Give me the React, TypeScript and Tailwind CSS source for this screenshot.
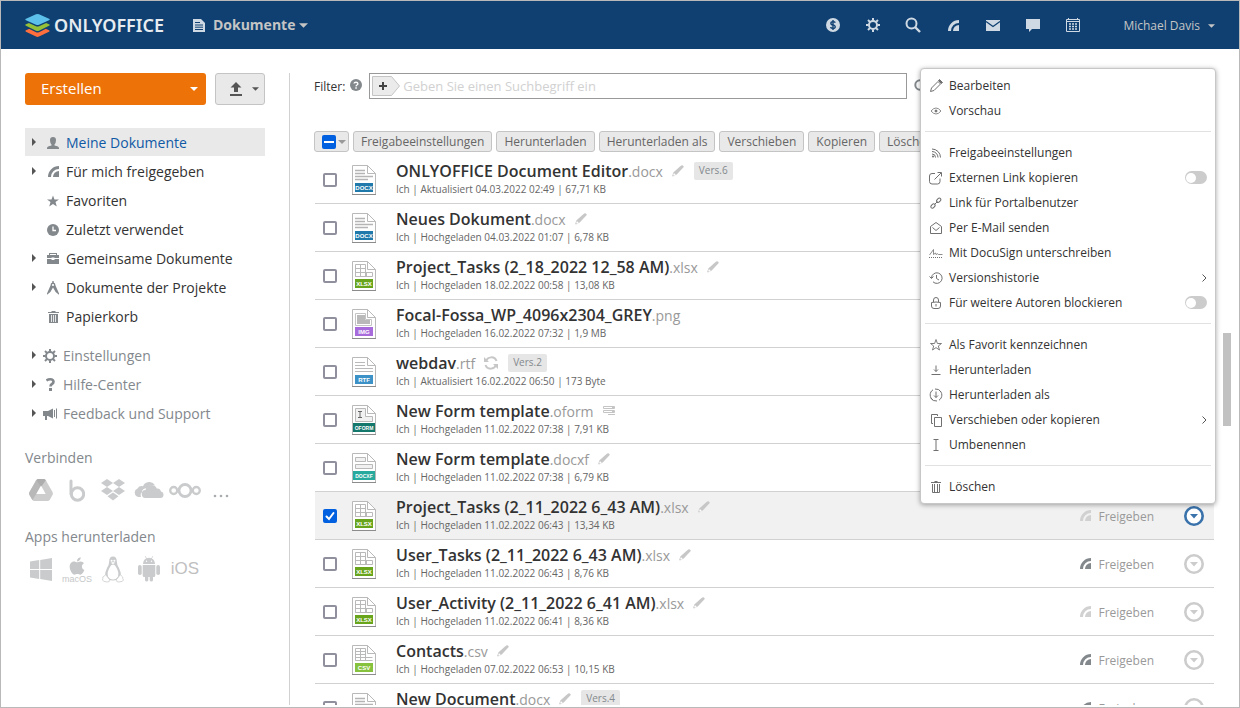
import { useState } from 'react'
import type { ReactNode } from 'react'
import { FaApple } from 'react-icons/fa'

type Badge = 'edit' | 'sync' | 'form'

interface FileItem {
  id: number
  name: string
  ext: string
  action: string
  date: string
  size: string
  shared: boolean
  badge?: Badge
  version?: number
}

const files: FileItem[] = [
  { id: 1, name: 'ONLYOFFICE Document Editor', ext: 'docx', action: 'Aktualisiert', date: '04.03.2022 02:49', size: '67,71 KB', shared: false, badge: 'edit', version: 6 },
  { id: 2, name: 'Neues Dokument', ext: 'docx', action: 'Hochgeladen', date: '04.03.2022 01:07', size: '6,78 KB', shared: false, badge: 'edit' },
  { id: 3, name: 'Project_Tasks (2_18_2022 12_58 AM)', ext: 'xlsx', action: 'Hochgeladen', date: '18.02.2022 00:58', size: '13,08 KB', shared: false, badge: 'edit' },
  { id: 4, name: 'Focal-Fossa_WP_4096x2304_GREY', ext: 'png', action: 'Hochgeladen', date: '16.02.2022 07:32', size: '1,9 MB', shared: false },
  { id: 5, name: 'webdav', ext: 'rtf', action: 'Aktualisiert', date: '16.02.2022 06:50', size: '173 Byte', shared: false, badge: 'sync', version: 2 },
  { id: 6, name: 'New Form template', ext: 'oform', action: 'Hochgeladen', date: '11.02.2022 07:38', size: '7,91 KB', shared: false, badge: 'form' },
  { id: 7, name: 'New Form template', ext: 'docxf', action: 'Hochgeladen', date: '11.02.2022 07:38', size: '6,79 KB', shared: false, badge: 'edit' },
  { id: 8, name: 'Project_Tasks (2_11_2022 6_43 AM)', ext: 'xlsx', action: 'Hochgeladen', date: '11.02.2022 06:43', size: '13,34 KB', shared: false, badge: 'edit' },
  { id: 9, name: 'User_Tasks (2_11_2022 6_43 AM)', ext: 'xlsx', action: 'Hochgeladen', date: '11.02.2022 06:43', size: '8,76 KB', shared: true, badge: 'edit' },
  { id: 10, name: 'User_Activity (2_11_2022 6_41 AM)', ext: 'xlsx', action: 'Hochgeladen', date: '11.02.2022 06:41', size: '8,36 KB', shared: false, badge: 'edit' },
  { id: 11, name: 'Contacts', ext: 'csv', action: 'Hochgeladen', date: '07.02.2022 06:53', size: '10,15 KB', shared: true, badge: 'edit' },
  { id: 12, name: 'New Document', ext: 'docx', action: 'Aktualisiert', date: '07.02.2022 06:50', size: '7,12 KB', shared: true, badge: 'edit', version: 4 },
]

const fileTypes: Record<string, { label: string; color: string }> = {
  docx: { label: 'DOCX', color: '#1f7aab' },
  xlsx: { label: 'XLSX', color: '#68a51d' },
  png: { label: 'IMG', color: '#a76bdb' },
  rtf: { label: 'RTF', color: '#3c92c7' },
  oform: { label: 'OFORM', color: '#15786c' },
  docxf: { label: 'DOCXF', color: '#27a99d' },
  csv: { label: 'CSV', color: '#87c23f' },
}

// Icons

function Logo() {
  return (
    <svg width="25" height="23" viewBox="0 0 25 23">
      <path d="M12.5 11.2 1 16.2q-1.4.8 0 1.5l10 4.9q1.5.6 3 0l10-4.9q1.4-.7 0-1.5z" fill="#ff6f3d" />
      <path d="M12.5 7 1 11.8q-1.4.7 0 1.5l10 4.9q1.5.6 3 0l10-4.9q1.4-.8 0-1.5z" fill="#0f4071" />
      <path d="M12.5 5.5 1 10.3q-1.4.7 0 1.5l10 4.9q1.5.6 3 0l10-4.9q1.4-.8 0-1.5z" fill="#95c038" />
      <path d="M11 1.8q1.5-.6 3 0l10 4.4q1.4.7 0 1.5l-10 4.6q-1.5.6-3 0L1 7.7q-1.4-.8 0-1.5z" fill="#0f4071" />
      <path d="M11 .3q1.5-.6 3 0l10 4.4q1.4.7 0 1.5l-10 4.6q-1.5.6-3 0L1 6.2q-1.4-.8 0-1.5z" fill="#5dc0ea" />
    </svg>
  )
}

function Caret({ className }: { className: string }) {
  return (
    <svg className={className} viewBox="0 0 8 4" fill="currentColor">
      <path d="M0 0h8L4 4z" />
    </svg>
  )
}

function ShareIcon({ className }: { className: string }) {
  return (
    <svg className={className} viewBox="0 0 11 11" fill="currentColor">
      <path d="M11 0A11 11 0 0 0 0 11h3A8 8 0 0 1 11 3z" />
      <path d="M11 5A6 6 0 0 0 5 11h6z" />
    </svg>
  )
}

function GearIcon() {
  return (
    <svg width="14" height="14" viewBox="0 0 14 14" fill="none" stroke="currentColor">
      <circle cx="7" cy="7" r="4" strokeWidth="2" />
      <path d="M7 0v2.5M7 11.5V14M0 7h2.5M11.5 7H14M2 2l1.9 1.9M10.1 10.1 12 12M12 2l-1.9 1.9M3.9 10.1 2 12" strokeWidth="2" />
    </svg>
  )
}

function DocumentIcon() {
  return (
    <svg width="12" height="13" viewBox="0 0 12 13">
      <path d="M0 0h8l4 4v9H0z" fill="currentColor" />
      <path d="M2 3.5h5M2 6h8M2 8.2h8M2 10.5h8" stroke="#0f4071" strokeWidth="1" />
    </svg>
  )
}

function PencilIcon() {
  return (
    <svg width="12" height="12" viewBox="0 0 12 12" className="text-[#c7c7c7]">
      <path d="M7.7 1.7 9.3.4q.9-.6 1.6.2l.5.5q.6.8-.1 1.5L4.700 9.500 1 11.600.2 10.900 1.300 7.400z" fill="currentColor" />
      <path d="m1.900 8 2 1.900-1.900.9-.8-.8z" fill="#fff" />
    </svg>
  )
}

function SyncIcon() {
  return (
    <svg width="14" height="14" viewBox="0 0 14 14" fill="none" stroke="#c7c7c7" strokeWidth="2">
      <path d="M2 5.500A5.500 5.500 0 0 1 12.500 5M12 8.500A5.500 5.500 0 0 1 1.500 9" />
      <path d="M0 1v5h5zM14 13V8H9z" fill="#c7c7c7" stroke="none" />
    </svg>
  )
}

function FormIcon() {
  return (
    <svg width="12" height="10" viewBox="0 0 12 10" fill="none" stroke="#c4c4c4">
      <path d="M.5.5h11v2H.5zM.5 4.500h11v2H.5zM5 8.500h7" />
      <path d="M9 1.500h2M9 5.500h2" />
    </svg>
  )
}

function FileIcon({ ext }: { ext: string }) {
  const type = fileTypes[ext]
  const wide = type.label.length > 4
  return (
    <svg width="24" height="30" viewBox="0 0 24 30" className="shrink-0">
      <path d="M.5.5h15l8 8v21H.5z" fill="#fff" stroke="#b9b9b9" />
      <path d="M0 29.500h24" stroke="#8c8c8c" />
      <path d="M15.500.5v8h8" fill="none" stroke="#b9b9b9" />
      {ext === 'docx' && <path d="M3 5.500h10M3 8.500h10M3 11.500h18M3 14.500h13" stroke="#b4b4b4" strokeWidth="1.500" />}
      {ext === 'rtf' && <path d="M3 5.500h10M3 8.500h10M3 11.500h18M3 14.500h18" stroke="#b9b9b9" />}
      {ext === 'xlsx' && (
        <path d="M3.500 3.500h10v12h-10zM3.500 7.500h10M3.500 11.500h17v4h-17M8.500 3.500v12M14.500 11.500v4" fill="none" stroke="#b9b9b9" />
      )}
      {ext === 'csv' && (
        <path d="M3.500 3.500h10v12h-10zM3.500 6.500h10M3.500 9.500h10M3.500 12.500h17M3.500 15.500h17M8.500 3.500v12" fill="none" stroke="#b9b9b9" />
      )}
      {ext === 'png' && (
        <>
          <path d="M3.500 4.500h10v6h6v6h-16z" fill="none" stroke="#c4c4c4" />
          <path d="M5 6h8v5h5v4H5z" fill="#b9b9b9" />
        </>
      )}
      {ext === 'oform' && (
        <>
          <path d="M3.500 3.500h10v8h7v5h-17z" fill="#f1f1f1" stroke="#b9b9b9" />
          <path d="M6 6.500h4M8 6.500v6M6 12.500h4" stroke="#666" />
        </>
      )}
      {ext === 'docxf' && <path d="M3.500 4.500h10v4h-10zM3.500 11.500h17v4h-17z" fill="#f1f1f1" stroke="#b9b9b9" />}
      <rect x={wide ? 1 : 3} y="18" width={wide ? 22 : 18} height="9" fill={type.color} />
      <text x="12" y="25" textAnchor="middle" fontSize={wide ? 5 : 6} fontWeight="700" fill="#fff" className="font-['Liberation_Sans',sans-serif]">
        {type.label}
      </text>
    </svg>
  )
}

function MenuIcon({ children }: { children: ReactNode }) {
  return (
    <svg width="14" height="14" viewBox="0 0 14 14" fill="none" stroke="#707070" className="shrink-0">
      {children}
    </svg>
  )
}

// Header

const headerIcons: { label: string; icon: ReactNode }[] = [
  {
    label: 'Zahlungen',
    icon: (
      <svg width="14" height="14" viewBox="0 0 14 14">
        <circle cx="7" cy="7" r="7" fill="currentColor" />
        <path d="M9.300 4.700Q8.700 3.600 7 3.600q-2.100 0-2.100 1.600T7 6.900t2.200 1.800T7 10.400q-1.900 0-2.500-1.300M7 2v10" fill="none" stroke="#0f4071" strokeWidth="1.400" />
      </svg>
    ),
  },
  { label: 'Einstellungen', icon: <GearIcon /> },
  {
    label: 'Suche',
    icon: (
      <svg width="16" height="16" viewBox="0 0 16 16" fill="none" stroke="currentColor">
        <circle cx="6.500" cy="6.500" r="5" strokeWidth="2" />
        <path d="m10 10 5 5" strokeWidth="2.400" />
      </svg>
    ),
  },
  { label: 'Feed', icon: <ShareIcon className="size-[11px]" /> },
  {
    label: 'E-Mail',
    icon: (
      <svg width="14" height="11" viewBox="0 0 14 11">
        <path d="M0 0h14v11H0z" fill="currentColor" />
        <path d="m0 1.500 7 5 7-5" fill="none" stroke="#0f4071" strokeWidth="1.300" />
      </svg>
    ),
  },
  {
    label: 'Chat',
    icon: (
      <svg width="14" height="13" viewBox="0 0 14 13" fill="currentColor">
        <path d="M0 0h14v10H6l-3 3v-3H0z" />
      </svg>
    ),
  },
  {
    label: 'Kalender',
    icon: (
      <svg width="14" height="14" viewBox="0 0 14 14" fill="none" stroke="currentColor">
        <path d="M.5 1.500h13v12H.5zM.5 3.500h13" />
        <path d="M2.500 0v2M11.500 0v2" />
        <path d="M3 6h8M3 8.500h8M3 11h8" strokeWidth="1.600" strokeDasharray="2 1" />
      </svg>
    ),
  },
]

function Header() {
  return (
    <header className="flex h-12 shrink-0 items-center bg-[#0f4071] px-6 text-[#cfd9e3]">
      <a href="#" className="flex items-center gap-1">
        <Logo />
        <span className="font-['Noto_Sans',sans-serif] text-lg font-semibold text-[#e7ecf1]">ONLYOFFICE</span>
      </a>
      <button className="ml-[29px] flex items-center gap-2 text-sm font-bold text-[#c5c5c5]">
        <span className="text-[#cfd9e3]"><DocumentIcon /></span>
        Dokumente
        <Caret className="-ml-1 h-[5px] w-[9px]" />
      </button>
      <nav className="ml-auto flex">
        {headerIcons.map(item => (
          <button key={item.label} aria-label={item.label} className="flex h-12 w-10 items-center justify-center">
            {item.icon}
          </button>
        ))}
      </nav>
      <button className="ml-[30px] flex items-center gap-2 pt-0.5 text-xs text-[#c5c5c5]">
        Michael Davis
        <Caret className="h-1 w-[7px]" />
      </button>
    </header>
  )
}

// Sidebar

interface NavItem {
  label: string
  icon: ReactNode
  expandable?: boolean
  active?: boolean
}

const folders: NavItem[] = [
  {
    label: 'Meine Dokumente',
    expandable: true,
    active: true,
    icon: (
      <svg width="12" height="12" viewBox="0 0 12 12" fill="currentColor">
        <path d="M6 0q3 0 3 3.300Q9 6 7.500 7.500v1q4.500.8 4.500 2.500v1H0v-1q0-1.700 4.500-2.500v-1Q3 6 3 3.300 3 0 6 0z" />
      </svg>
    ),
  },
  { label: 'Für mich freigegeben', expandable: true, icon: <ShareIcon className="size-[11px]" /> },
  {
    label: 'Favoriten',
    icon: (
      <svg width="13" height="12" viewBox="0 0 13 12" fill="currentColor">
        <path d="m6.500 0 1.600 4.400H13L9.200 7.200 10.600 12 6.500 9.200 2.400 12l1.400-4.800L0 4.400h4.900z" />
      </svg>
    ),
  },
  {
    label: 'Zuletzt verwendet',
    icon: (
      <svg width="12" height="12" viewBox="0 0 12 12">
        <circle cx="6" cy="6" r="6" fill="currentColor" />
        <path d="M6 2.500v4h3" fill="none" stroke="#fff" strokeWidth="1.300" />
      </svg>
    ),
  },
  {
    label: 'Gemeinsame Dokumente',
    expandable: true,
    icon: (
      <svg width="12" height="11" viewBox="0 0 12 11" fill="currentColor">
        <path d="M2 0h8v2h2v3H7.500V4.500h-3V5H0V2h2zm1 1v1h6V1zM0 6h4.500v1h3V6H12v5H0z" />
      </svg>
    ),
  },
  {
    label: 'Dokumente der Projekte',
    expandable: true,
    icon: (
      <svg width="12" height="14" viewBox="0 0 12 14">
        <path d="M5.300 0h1.400v1.500q1.800.7 1.800 3L12 12.500v1.300L8.600 11 6 6.500 3.400 11 0 13.800v-1.300l3.500-8q0-2.300 1.800-3z" fill="currentColor" />
        <circle cx="6" cy="4" r="1.100" fill="#fff" />
      </svg>
    ),
  },
  {
    label: 'Papierkorb',
    icon: (
      <svg width="11" height="12" viewBox="0 0 11 12" fill="currentColor">
        <path d="M0 1h3.500V0h4v1H11v1H0zM1 3h9v9H1z" />
        <path d="M3.500 4v7M5.500 4v7M7.500 4v7" stroke="#fff" strokeWidth=".8" />
      </svg>
    ),
  },
]

const tools: NavItem[] = [
  { label: 'Einstellungen', expandable: true, icon: <GearIcon /> },
  {
    label: 'Hilfe-Center',
    expandable: true,
    icon: (
      <svg width="9" height="13" viewBox="0 0 9 13" fill="none" stroke="currentColor">
        <path d="M.5 2.500Q2 1.300 4.300 1.300 7.500 1.300 7.500 3.800 7.500 5.200 6 6T4.500 8.500" strokeWidth="2.600" />
        <path d="M3 10h3v3H3z" fill="currentColor" stroke="none" />
      </svg>
    ),
  },
  {
    label: 'Feedback und Support',
    expandable: true,
    icon: (
      <svg width="14" height="12" viewBox="0 0 14 12" fill="currentColor">
        <path d="M0 3h5l5-2.500v10L5 8H4v4H2V8H0zM11 2h1v7h-1zM13 .5h1v10h-1z" />
      </svg>
    ),
  },
]

const clouds: { label: string; icon: ReactNode }[] = [
  {
    label: 'Google Drive',
    icon: (
      <svg width="24" height="22" viewBox="0 0 24 22">
        <path d="M9.500 0h5q1.500 0 2.300 1.300L23.500 13q.8 1.500 0 3L21 20.500Q20 22 18.500 22h-13Q4 22 3 20.500L.5 16q-.8-1.500 0-3L7.200 1.300Q8 0 9.500 0z" fill="#cdcdcd" />
        <path d="M7.200 1.300 12 7.500 3.500 21 .5 16q-.8-1.500 0-3z" fill="#b8b8b8" />
        <path d="M9.500 0h5q1.500 0 2.300 1.300L12 8 7.200 1.300Q8 0 9.500 0z" fill="#adadad" />
        <path d="M12 6.500 7.300 15h9.400z" fill="#fff" />
      </svg>
    ),
  },
  {
    label: 'Box',
    icon: (
      <svg width="16" height="23" viewBox="0 0 16 23" fill="none" stroke="#cacbcc" strokeWidth="3">
        <circle cx="8.500" cy="15" r="6.200" />
        <path d="M2 2v13" strokeLinecap="round" />
      </svg>
    ),
  },
  {
    label: 'Dropbox',
    icon: (
      <svg width="24" height="22" viewBox="0 0 24 22" fill="#cacbcc">
        <path d="M6 0l6 4-6 4-6-4zM18 0l6 4-6 4-6-4zM6 8l6 4-6 4-6-4zM18 8l6 4-6 4-6-4zM12 13.500l5.500 3.800L12 21.500l-5.500-4.200z" />
      </svg>
    ),
  },
  {
    label: 'OneDrive',
    icon: (
      <svg width="30" height="16" viewBox="0 0 30 16" fill="#cacbcc" className="shrink-0">
        <path d="M7 15H4.500A4.500 4.500 0 0 1 3.500 6.400 5 5 0 0 1 9 4.200 6.700 6.700 0 0 1 21 3.300q-5-1-7.300 3-5.500-.3-5.900 4.200Q6 12 7 15z" />
        <path d="M12 16a4 4 0 0 1-.5-8 6 6 0 0 1 11.300-1.500Q26 6 27 9.500a3.300 3.300 0 0 1-.5 6.500z" />
      </svg>
    ),
  },
  {
    label: 'Nextcloud',
    icon: (
      <svg width="32" height="15" viewBox="0 0 32 15" fill="none" stroke="#cacbcc">
        <circle cx="16" cy="7.500" r="6" strokeWidth="2.800" />
        <circle cx="4.700" cy="7.500" r="3.500" strokeWidth="2.300" />
        <circle cx="27.300" cy="7.500" r="3.500" strokeWidth="2.300" />
      </svg>
    ),
  },
  {
    label: 'Mehr',
    icon: (
      <svg width="16" height="4" viewBox="0 0 16 4" fill="#a9acae" className="mt-3">
        <circle cx="2" cy="2" r="1.300" />
        <circle cx="8" cy="2" r="1.300" />
        <circle cx="14" cy="2" r="1.300" />
      </svg>
    ),
  },
]

const apps: { label: string; icon: ReactNode }[] = [
  {
    label: 'Windows',
    icon: (
      <svg width="22" height="23" viewBox="0 0 22 23" fill="#cacbcc">
        <path d="M0 3.500 9.200 2v9H0zM10.200 1.900 22 0v11H10.200zM0 12h9.200v9L0 19.500zM10.200 12H22v11l-11.800-1.900z" />
      </svg>
    ),
  },
  {
    label: 'macOS',
    icon: (
      <span className="flex flex-col items-center text-[#c6c7c8]">
        <FaApple size={20} />
        <span className="font-['Liberation_Sans',sans-serif] text-[9px] leading-[7px]">macOS</span>
      </span>
    ),
  },
  {
    label: 'Linux',
    icon: (
      <svg width="22" height="27" viewBox="0 0 22 27" fill="#fff" stroke="#cacbcc">
        <path d="M11 .5q3.800 0 3.800 5 0 3 2.200 6.500 2.500 4.500 1.500 9-2 3.500-7.500 3.500T3.500 21q-1-4.500 1.500-9 2.200-3.500 2.200-6.500 0-5 3.800-5z" fill="#cacbcc" stroke="none" />
        <path d="M11 8.500q-2.300 0-3 2.500-3.300 5-2 9.500 1.500 3 5 3t5-3q1.300-4.500-2-9.500-.7-2.500-3-2.500z" stroke="none" />
        <circle cx="9.600" cy="4.700" r="1" stroke="none" />
        <circle cx="12.400" cy="4.700" r="1" stroke="none" />
        <path d="M9 6.800 11 8.200l2-1.400-2-.8z" stroke="none" />
        <path d="M3.500 18.500 7.500 23.500Q8 26.500 5 26 .5 25.500.5 24q.5-1.500.3-3 1.700-.5 2.700-2.500zM18.500 18.500l-4 5q-.5 3 2.500 2.500 4.500-.5 4.500-2-1-1-.8-3-1.200-.5-2.200-2.500z" strokeWidth=".8" />
      </svg>
    ),
  },
  {
    label: 'Android',
    icon: (
      <svg width="22" height="26" viewBox="0 0 22 26" fill="#cacbcc">
        <path d="M5 8q.3-4.300 3.200-5.500L6.800.3l.5-.3 1.500 2.200q2.200-.7 4.400 0L14.700 0l.5.3-1.400 2.200Q16.700 3.700 17 8z" />
        <rect x="0" y="9" width="3.700" height="10" rx="1.800" />
        <rect x="18.300" y="9" width="3.700" height="10" rx="1.800" />
        <path d="M4.700 9h12.600v10.500q0 1.500-1.500 1.500H15v3.200a1.700 1.700 0 0 1-3.300 0V21h-1.400v3.200a1.700 1.700 0 0 1-3.300 0V21h-.8q-1.500 0-1.500-1.500z" />
        <circle cx="8.500" cy="5.200" r=".7" fill="#fff" />
        <circle cx="13.500" cy="5.200" r=".7" fill="#fff" />
      </svg>
    ),
  },
  { label: 'iOS', icon: <span className="font-['Liberation_Sans',sans-serif] text-[17px] font-medium text-[#bfc0c1]">iOS</span> },
]

function NavRow({ item, small }: { item: NavItem; small?: boolean }) {
  return (
    <a
      href="#"
      className={`flex h-7 items-center pl-[7px] text-sm ${item.active ? 'bg-[#e9e9e9] text-[#1059a5]' : small ? 'text-[#83888d]' : 'text-[#333]'}`}
    >
      <svg width="4" height="8" viewBox="0 0 4 8" fill="#555">
        {item.expandable && <path d="M0 0v8l4-4z" />}
      </svg>
      <span className={`flex items-center justify-center pt-px text-[#83888d] ${small ? 'ml-[5px] w-[18px]' : 'ml-[11px] w-3'}`}>{item.icon}</span>
      <span className={small ? 'ml-1 pt-0.5' : 'ml-[7px] pt-0.5'}>{item.label}</span>
    </a>
  )
}

function IconLinks({ title, items }: { title: string; items: { label: string; icon: ReactNode }[] }) {
  return (
    <section className="text-[#83888d]">
      <h2 className="text-sm">{title}</h2>
      <div className="mt-1.5 flex h-8 items-center gap-1">
        {items.map(item => (
          <a key={item.label} href="#" aria-label={item.label} className="flex w-8 items-center justify-center">
            {item.icon}
          </a>
        ))}
      </div>
    </section>
  )
}

function Sidebar() {
  return (
    <aside className="mx-6 w-60 shrink-0">
      <div className="flex gap-[9px]">
        <button className="flex h-8 flex-1 items-center justify-between rounded-[3px] bg-[#ed7309] pr-2 pl-4 text-[15px] text-white">
          <span className="pb-0.5">Erstellen</span>
          <Caret className="h-1 w-2" />
        </button>
        <button aria-label="Hochladen" className="flex h-8 w-[50px] items-center justify-end gap-2.5 rounded-[3px] border border-[#c4c4c4] bg-[#e9e9e9] pr-[5px] text-[#555]">
          <svg width="12" height="14" viewBox="0 0 12 14" fill="currentColor">
            <path d="m6 0 5.500 5.500H8V10H4V5.500H.5zM0 12h12v2H0z" />
          </svg>
          <Caret className="h-1 w-[7px]" />
        </button>
      </div>
      <nav className="mt-[23px] flex flex-col gap-px">
        {folders.map(item => <NavRow key={item.label} item={item} />)}
      </nav>
      <nav className="mt-[11px] flex flex-col gap-px">
        {tools.map(item => <NavRow key={item.label} item={item} small />)}
      </nav>
      <div className="mt-[21px] flex flex-col gap-[21px]">
        <IconLinks title="Verbinden" items={clouds} />
        <IconLinks title="Apps herunterladen" items={apps} />
      </div>
    </aside>
  )
}

// File list

function FilterBar() {
  return (
    <div className="flex items-start text-xs text-[#333]">
      <label htmlFor="filter" className="flex h-[26px] items-center pt-0.5">Filter:</label>
      <svg width="12" height="12" viewBox="0 0 12 12" className="mt-1.5 mr-[7px] ml-[5px]">
        <circle cx="6" cy="6" r="6" fill="#83888d" />
        <path d="M4 4.500Q4.200 3.200 6 3.200t1.900 1.500Q7.900 5.500 7 6T6 7.300" fill="none" stroke="#fff" strokeWidth="1.400" />
        <path d="M5.300 8.200h1.500v1.500H5.300z" fill="#fff" />
      </svg>
      <div className="flex h-[26px] flex-1 items-center border border-[#999] pl-0.5">
        <button aria-label="Filter hinzufügen" className="shrink-0">
          <svg width="28" height="20" viewBox="0 0 28 20">
            <path d="M.5.5h19l8 9.500-8 9.500H.5z" fill="#ebebeb" stroke="#c4c4c4" />
            <path d="M7 10h8M11 6v8" stroke="#444" strokeWidth="2" />
          </svg>
        </button>
        <input id="filter" className="ml-[3px] min-w-0 flex-1 pt-0.5 text-[13px] outline-none placeholder:text-[#d1d1d1]" placeholder="Geben Sie einen Suchbegriff ein" />
      </div>
      <div className="flex w-[307px] pt-1.5 pl-[7px]">
        <button aria-label="Suchen">
          <svg width="14" height="14" viewBox="0 0 14 14" fill="none" stroke="#83888d" strokeWidth="2">
            <circle cx="6" cy="6" r="4.700" />
            <path d="m9.500 9.500 4 4" />
          </svg>
        </button>
      </div>
    </div>
  )
}

const actions = ['Freigabeeinstellungen', 'Herunterladen', 'Herunterladen als', 'Verschieben', 'Kopieren', 'Löschen']

function Toolbar() {
  return (
    <div className="mt-8 flex h-[21px] gap-1 text-xs text-[#666]">
      <div className="relative flex w-[35px] items-center justify-between rounded-[3px] border border-[#c4c4c4] bg-[#e9e9e9] pr-0.5 pl-[7px]">
        <input type="checkbox" aria-label="Alle auswählen" defaultChecked className="size-3.5 appearance-none rounded-[2px] bg-[#0060df]" />
        <span className="pointer-events-none absolute left-[9px] h-0.5 w-2.5 bg-white" />
        <Caret className="h-1 w-2 text-[#999]" />
      </div>
      {actions.map(action => (
        <button key={action} className="flex items-center rounded-[3px] border border-[#c4c4c4] bg-[#e9e9e9] px-[7px]">
          {action}
        </button>
      ))}
    </div>
  )
}

interface RowProps {
  file: FileItem
  checked: boolean
  onToggle: () => void
}

function FileRow({ file, checked, onToggle }: RowProps) {
  return (
    <li className={`flex h-12 shrink-0 items-center border-b border-[#d1d1d1] pr-2.5 pl-2 ${checked ? 'bg-[#f1f1f1]' : 'bg-white'}`}>
      <span className="relative flex size-3.5 shrink-0">
        <input
          type="checkbox"
          aria-label={file.name}
          checked={checked}
          onChange={onToggle}
          className="size-3.5 appearance-none rounded-[2px] border-2 border-[#8f8f9d] bg-white checked:border-[#0060df] checked:bg-[#0060df]"
        />
        {checked && (
          <svg viewBox="0 0 14 14" fill="none" stroke="#fff" strokeWidth="2" strokeLinecap="round" className="pointer-events-none absolute inset-0">
            <path d="m3.500 7.500 2.500 2.500 4.500-6" />
          </svg>
        )}
      </span>
      <span className="mr-5 ml-[15px]"><FileIcon ext={file.ext} /></span>
      <div className="min-w-0 flex-1 pb-1">
        <div className="flex h-[22px] items-center">
          <a href="#" className="text-base leading-[22px] font-semibold text-[#333]">
            {file.name}
            <span className="text-sm font-normal text-[#999]">.{file.ext}</span>
          </a>
          <span className="ml-[9px] flex items-center gap-2.5">
            {file.badge === 'edit' && <PencilIcon />}
            {file.badge === 'sync' && <SyncIcon />}
            {file.badge === 'form' && <FormIcon />}
            {file.version && (
              <span className="flex h-[18px] items-center rounded-[2px] bg-[#e6e6e6] px-[5px] text-[10px] text-[#83888d]">Vers.{file.version}</span>
            )}
          </span>
        </div>
        <p className="text-[10px] leading-[14px] text-[#666]">
          Ich | {file.action} {file.date} | {file.size}
        </p>
      </div>
      <button className="flex items-center gap-[7px] text-xs text-[#999]">
        <ShareIcon className={file.shared ? 'size-[11px] text-[#83888d]' : 'size-[11px] text-[#d1d1d1]'} />
        <span className="pt-0.5">Freigeben</span>
      </button>
      <button aria-label="Aktionen" className={checked ? 'ml-[30px] text-[#3a72ab]' : 'ml-[30px] text-[#ccc]'}>
        <svg width="20" height="20" viewBox="0 0 20 20">
          <circle cx="10" cy="10" r="8.700" fill="#fff" stroke="currentColor" strokeWidth="2.600" />
          <path d="M6 8h8l-4 4.500z" fill="currentColor" />
        </svg>
      </button>
    </li>
  )
}

// Context menu

interface MenuEntry {
  label: string
  icon: ReactNode
  toggle?: boolean
  submenu?: boolean
}

const menuGroups: MenuEntry[][] = [
  [
    { label: 'Bearbeiten', icon: <><path d="M1.500 12.500 2.500 9 9 2.500 11.500 5 5 11.500z" /><path d="m9.500 1.500 1-1L13.500 3.500l-1 1z" fill="#707070" /></> },
    { label: 'Vorschau', icon: <><path d="M2 7q5-6 10 0-5 6-10 0z" strokeWidth=".8" /><circle cx="7" cy="7" r="1" fill="#707070" /></> },
  ],
  [
    {
      label: 'Freigabeeinstellungen',
      icon: <><path d="M3 3A8.500 8.500 0 0 1 11.500 11.500M3 5.500A6 6 0 0 1 9 11.500M3 8A3.500 3.500 0 0 1 6.500 11.500" /><circle cx="4" cy="10.500" r="1" fill="#707070" stroke="none" /></>,
    },
    { label: 'Externen Link kopieren', toggle: true, icon: <path d="M6 2.500H3q-2.500 0-2.500 2.500v5.500q0 2.500 2.500 2.500h5.500q2.500 0 2.500-2.500V7.500M5.500 8.500 12 2M8.500 1.500h4v4" /> },
    { label: 'Link für Portalbenutzer', icon: <><ellipse cx="4" cy="10" rx="2.500" ry="1.600" transform="rotate(-45 4 10)" /><ellipse cx="9.700" cy="4.300" rx="2.500" ry="1.600" transform="rotate(-45 9.700 4.300)" /><path d="m5.500 8.500 3-3" /></> },
    { label: 'Per E-Mail senden', icon: <path d="M1.500 5.500 7 1.500l5.500 4v7h-11zM3.500 6.500 7 9.500 10.500 6.500" /> },
    { label: 'Mit DocuSign unterschreiben', icon: <><path d="M.5 9 4.500 3.500V8.500L6.500 7 7 8.500q2-1.500 2.500 0h4" strokeWidth=".8" /><path d="M0 11.500h14" strokeDasharray="1 1" /></> },
    { label: 'Versionshistorie', submenu: true, icon: <path d="M2.500 7A5.300 5.300 0 1 1 4 10.800M.5 5.500l2 2 2-2M7.500 4v3.500L10 9" /> },
    { label: 'Für weitere Autoren blockieren', toggle: true, icon: <path d="M2.500 6.500q4.500-1 9 0V10q0 2.500-2.500 2.500H5Q2.500 12.500 2.500 10zM4.500 6V4q0-2.500 2.500-2.500T9.500 4v2M7 8v2.500" /> },
  ],
  [
    { label: 'Als Favorit kennzeichnen', icon: <path d="m7 1.500 1.400 4h4.100L9.300 8l1.200 4L7 9.600 3.500 12l1.200-4-3.200-2.500h4.100z" strokeWidth=".9" /> },
    { label: 'Herunterladen', icon: <path d="M7 2.500v6M5 6.500l2 2 2-2M2.500 11.500h9" /> },
    { label: 'Herunterladen als', icon: <path d="M4 12A6 6 0 0 1 4 1.800M6 1q4-.5 6 3M10 2A6 6 0 0 1 10 12.200M8 13q-4 .5-6.500-3M7 3.500v6M5 7.500l2 2 2-2" /> },
    { label: 'Verschieben oder kopieren', submenu: true, icon: <path d="M5.500 4.500h7v9h-7zM4 10.500H2.500v-9h6v1.500" /> },
    { label: 'Umbenennen', icon: <path d="M4.500 1.500h5M7 1.500v11M4.500 12.500h5" /> },
  ],
  [{ label: 'Löschen', icon: <path d="M2 2.500h10M5.500 1.500h3M3.500 4v8.500h7V4M5.500 4v8M8.500 4v8" /> }],
]

function ContextMenu() {
  return (
    <div className="absolute top-[19px] right-[23px] w-[296px] divide-y divide-[#e1e1e1] rounded-[4px] border border-[#c7c7c7] bg-white px-1 pb-1 shadow-[0_1px_5px_rgba(0,0,0,0.35)]">
      {menuGroups.map((group, i) => (
        <ul key={i} className={i === 0 ? 'pt-1 pb-2' : i === menuGroups.length - 1 ? 'pt-2' : 'py-2'}>
          {group.map(entry => (
            <li key={entry.label} className="flex h-[25px] items-center pr-1 pl-1 text-xs text-[#333]">
              <button className="flex flex-1 items-center gap-1.5 text-left">
                <MenuIcon>{entry.icon}</MenuIcon>
                {entry.label}
              </button>
              {entry.toggle && (
                <label className="flex h-[13px] w-[22px] items-center rounded-full bg-[#ccc] pl-px">
                  <input type="checkbox" aria-label={entry.label} className="size-2.5 appearance-none rounded-full bg-white" />
                </label>
              )}
              {entry.submenu && (
                <svg width="5" height="8" viewBox="0 0 5 8" fill="none" stroke="#555">
                  <path d="m.5.5 3.500 3.500-3.500 3.500" />
                </svg>
              )}
            </li>
          ))}
        </ul>
      ))}
    </div>
  )
}

export default function App() {
  const [selected, setSelected] = useState<number[]>([8])

  function toggle(id: number) {
    setSelected(prev => (prev.includes(id) ? prev.filter(x => x !== id) : [...prev, id]))
  }

  return (
    <div className="flex h-screen flex-col border border-[#b9b9b9] bg-white pb-0.5 font-['Open_Sans',sans-serif]">
      <Header />
      <div className="relative flex min-h-0 flex-1 pt-6">
        <Sidebar />
        <main className="mr-[25px] flex min-w-0 flex-1 flex-col border-l border-[#d1d1d1] pl-6">
          <FilterBar />
          <Toolbar />
          <ul className="mt-1 ml-px flex min-h-0 flex-1 flex-col overflow-hidden">
            {files.map(file => (
              <FileRow key={file.id} file={file} checked={selected.includes(file.id)} onToggle={() => toggle(file.id)} />
            ))}
          </ul>
        </main>
        <div className="absolute top-[284px] right-2 h-[93px] w-2 bg-[#c1c1c1]" />
        <ContextMenu />
      </div>
    </div>
  )
}
